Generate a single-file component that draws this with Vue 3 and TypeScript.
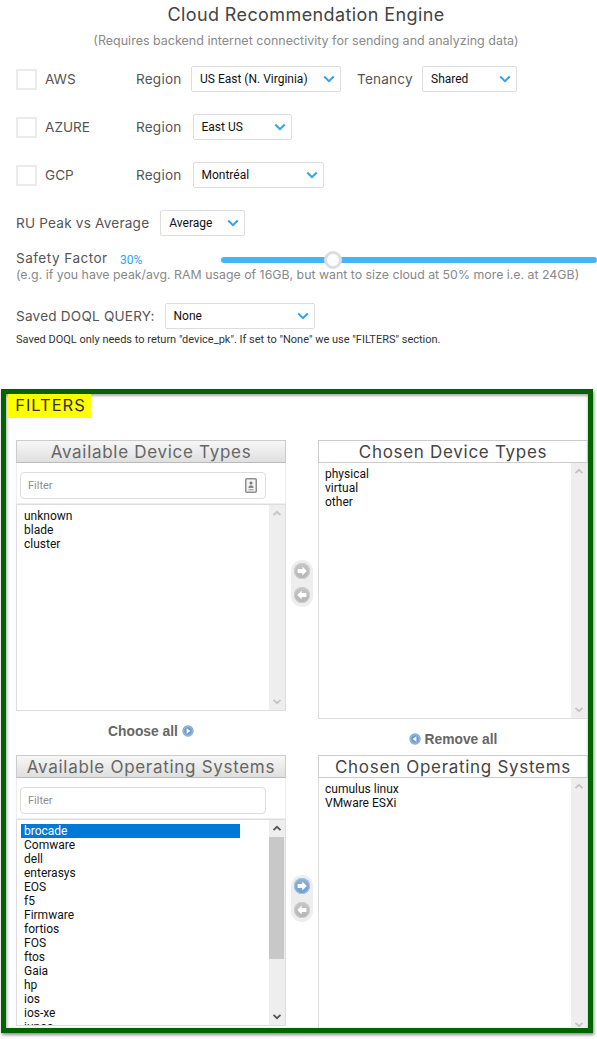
<script setup lang="ts">
interface Cloud {
  name: string
  region: string
  mod: string
  options: string[]
}

interface Pane {
  title: string
  items: string[]
  selected?: string
  thumb?: boolean
}

interface Selector {
  available: Pane
  chosen: Pane
  hasIcon: boolean
  active: boolean
}

const clouds: Cloud[] = [
  { name: 'AWS', region: 'US East (N. Virginia)', mod: 'aws', options: ['US East (N. Virginia)'] },
  { name: 'AZURE', region: 'East US', mod: 'azure', options: ['East US'] },
  { name: 'GCP', region: 'Montréal', mod: 'gcp', options: ['Montréal'] },
]

const selectors: Selector[] = [
  {
    available: { title: 'Available Device Types', items: ['unknown', 'blade', 'cluster'] },
    chosen: { title: 'Chosen Device Types', items: ['physical', 'virtual', 'other'] },
    hasIcon: true,
    active: false,
  },
  {
    available: {
      title: 'Available Operating Systems',
      items: ['brocade', 'Comware', 'dell', 'enterasys', 'EOS', 'f5', 'Firmware', 'fortios', 'FOS', 'ftos', 'Gaia', 'hp', 'ios', 'ios-xe', 'iunos'],
      selected: 'brocade',
      thumb: true,
    },
    chosen: { title: 'Chosen Operating Systems', items: ['cumulus linux', 'VMware ESXi'] },
    hasIcon: false,
    active: true,
  },
]
</script>

<template>
  <main class="page">
    <header class="head">
      <h1 class="title">Cloud Recommendation Engine</h1>
      <p class="subtitle">(Requires backend internet connectivity for sending and analyzing data)</p>
    </header>

    <section class="clouds">
      <div v-for="c in clouds" :key="c.name" class="cloud-row" :class="'row-' + c.mod">
        <input class="check" type="checkbox" :aria-label="c.name" />
        <span class="cloud-name">{{ c.name }}</span>
        <span class="label region">Region</span>
        <div class="select-wrap" :class="'sel-' + c.mod">
          <select class="select">
            <option v-for="o in c.options" :key="o">{{ o }}</option>
          </select>
          <svg class="chev" viewBox="0 0 12 8"><path d="M1.2 1.5 6 6.2l4.8-4.7" /></svg>
        </div>
        <template v-if="c.mod === 'aws'">
          <span class="label tenancy">Tenancy</span>
          <div class="select-wrap sel-tenancy">
            <select class="select"><option>Shared</option></select>
            <svg class="chev" viewBox="0 0 12 8"><path d="M1.2 1.5 6 6.2l4.8-4.7" /></svg>
          </div>
        </template>
      </div>
    </section>

    <section class="peak">
      <span class="label">RU Peak vs Average</span>
      <div class="select-wrap sel-peak">
        <select class="select"><option>Average</option></select>
        <svg class="chev" viewBox="0 0 12 8"><path d="M1.2 1.5 6 6.2l4.8-4.7" /></svg>
      </div>
    </section>

    <section class="safety">
      <div class="safety-line">
        <span class="label safety-label">Safety Factor</span>
        <span class="pct">30%</span>
        <input class="slider" type="range" min="0" max="100" step="0.1" value="28.7" aria-label="Safety Factor" />
      </div>
      <p class="hint">(e.g. if you have peak/avg. RAM usage of 16GB, but want to size cloud at 50% more i.e. at 24GB)</p>
    </section>

    <section class="doql">
      <div class="doql-line">
        <span class="label">Saved DOQL QUERY:</span>
        <div class="select-wrap sel-doql">
          <select class="select"><option>None</option></select>
          <svg class="chev" viewBox="0 0 12 8"><path d="M1.2 1.5 6 6.2l4.8-4.7" /></svg>
        </div>
      </div>
      <p class="note">Saved DOQL only needs to return "device_pk". If set to "None" we use "FILTERS" section.</p>
    </section>

    <section class="frame">
      <h2 class="filters-tag">FILTERS</h2>

      <div v-for="s in selectors" :key="s.available.title" class="selector">
        <div class="col">
          <div class="pane-title available-title">{{ s.available.title }}</div>
          <div class="filter-box">
            <div class="filter-input">
              <span class="placeholder">Filter</span>
              <svg v-if="s.hasIcon" class="card-icon" viewBox="0 0 12 15">
                <rect x="0.75" y="0.75" width="10.5" height="13.5" rx="1" fill="#f4f4f4" stroke="#8f8f8f" stroke-width="1.5" />
                <circle cx="6" cy="5" r="1.5" fill="#777" />
                <path d="M3.4 10c0-1.8 1-2.7 2.6-2.7S8.6 8.200 8.600 10z" fill="#888" />
                <rect x="3.400" y="11" width="5.200" height="1.300" fill="#aaa" />
              </svg>
            </div>
          </div>
          <div class="list list-available">
            <div class="items">
              <div v-for="item in s.available.items" :key="item" class="item" :class="{ selected: item === s.available.selected }">{{ item }}</div>
            </div>
            <div class="scroll" :class="{ 'scroll-on': s.available.thumb }">
              <svg class="scroll-arrow" viewBox="0 0 10 7"><path d="M1.5 5.2 5 1.8l3.5 3.4" /></svg>
              <div class="track"><div v-if="s.available.thumb" class="thumb"></div></div>
              <svg class="scroll-arrow" viewBox="0 0 10 7"><path d="M1.5 1.8 5 5.2l3.5-3.4" /></svg>
            </div>
          </div>
          <a class="all-link choose-all">
            Choose all
            <svg class="all-icon" viewBox="0 0 12 12">
              <circle cx="6" cy="6" r="5.7" fill="#7fa8d4" />
              <circle cx="6" cy="6" r="4.3" fill="#6f9bcb" stroke="#b9d0e8" stroke-width="0.6" />
              <path d="M4.6 3.3 8.4 6 4.6 8.700z" fill="#fff" />
            </svg>
          </a>
        </div>

        <div class="mover">
          <span class="mv-btn" :class="{ 'mv-active': s.active }">
            <svg viewBox="0 0 16 16"><path d="M8.300 3.500 12.800 8 8.300 12.500V10H3.600V6h4.700z" fill="#fff" /></svg>
          </span>
          <span class="mv-btn">
            <svg viewBox="0 0 16 16"><path d="M7.700 3.500 3.200 8l4.500 4.500V10h4.700V6H7.700z" fill="#fff" /></svg>
          </span>
        </div>

        <div class="col">
          <div class="pane-title chosen-title">{{ s.chosen.title }}</div>
          <div class="list list-chosen">
            <div class="items">
              <div v-for="item in s.chosen.items" :key="item" class="item">{{ item }}</div>
            </div>
            <div class="scroll">
              <svg class="scroll-arrow" viewBox="0 0 10 7"><path d="M1.5 5.2 5 1.8l3.5 3.4" /></svg>
              <div class="track"></div>
              <svg class="scroll-arrow" viewBox="0 0 10 7"><path d="M1.5 1.8 5 5.2l3.5-3.4" /></svg>
            </div>
          </div>
          <a class="all-link remove-all">
            <svg class="all-icon" viewBox="0 0 12 12">
              <circle cx="6" cy="6" r="5.7" fill="#7fa8d4" />
              <circle cx="6" cy="6" r="4.3" fill="#6f9bcb" stroke="#b9d0e8" stroke-width="0.6" />
              <path d="M7.400 3.300 3.600 6l3.800 2.700z" fill="#fff" />
            </svg>
            Remove all
          </a>
        </div>
      </div>
    </section>
  </main>
</template>

<style>
html,
body {
  margin: 0;
  background: #fff;
}
</style>

<style scoped>
.page {
  width: 597px;
  height: 1039px;
  overflow: hidden;
  font-family: Inter, "Liberation Sans", sans-serif;
  color: #444;
  background: #fff;
}

.head {
  text-align: center;
  padding-top: 4px;
  padding-left: 15px;
}

.title {
  margin: 0;
  font-size: 18px;
  line-height: 22px;
  font-weight: 400;
  color: #444;
  letter-spacing: 0.4px;
}

.subtitle {
  margin: 6px 0 0;
  font-size: 12.5px;
  line-height: 18px;
  color: #8a8a8a;
}

.clouds {
  padding: 16px 0 0 16px;
  display: flex;
  flex-direction: column;
  gap: 22px;
}

.cloud-row {
  display: flex;
  align-items: center;
  height: 26px;
}

.check {
  appearance: none;
  width: 21px;
  height: 21px;
  margin: 0 8px 0 0;
  background: #fff;
  border: 2px solid #eaeaea;
  box-sizing: border-box;
  flex: none;
}

.cloud-name {
  width: 91px;
  font-size: 13.600px;
  color: #555;
}

.label {
  font-size: 13.600px;
  color: #555;
  letter-spacing: 0.2px;
  white-space: nowrap;
}

.region {
  width: 55px;
}

.row-azure .region,
.row-gcp .region {
  width: 56.500px;
}

.tenancy {
  margin-left: 16px;
  width: 65px;
}

.select-wrap {
  position: relative;
  height: 26px;
  flex: none;
}

.select {
  appearance: none;
  display: block;
  width: 100%;
  height: 26px;
  box-sizing: border-box;
  padding: 0 24px 0 8px;
  border: 1px solid #ddd;
  border-radius: 2px;
  background: #fff;
  font-family: Roboto, "Liberation Sans", sans-serif;
  font-size: 12px;
  color: #111;
}

.chev {
  position: absolute;
  right: 6px;
  top: 9px;
  width: 12px;
  height: 8px;
  fill: none;
  stroke: #2ea3f2;
  stroke-width: 2;
  pointer-events: none;
}

.sel-aws { width: 150px; }
.sel-azure { width: 99px; }
.sel-gcp { width: 131px; }
.sel-tenancy { width: 95px; }
.sel-peak { width: 85px; margin-left: 11px; }
.sel-doql { width: 150px; margin-left: 10px; }

.peak {
  display: flex;
  align-items: center;
  padding: 22px 0 0 16px;
}

.safety {
  padding: 12px 0 0 16px;
}

.safety-line {
  display: flex;
  align-items: center;
  height: 20px;
}

.safety-label {
  width: 92px;
  flex: none;
  letter-spacing: 0.45px;
}

.pct {
  font-family: Roboto, "Liberation Sans", sans-serif;
  font-size: 12px;
  color: #2ea3f2;
  margin: 4px 0 0 12px;
  width: 101px;
  flex: none;
}

.slider {
  appearance: none;
  width: 376px;
  height: 6px;
  margin: 4px 0 0;
  border-radius: 3px;
  background: #45b5f5;
  flex: none;
}

.slider::-webkit-slider-thumb {
  appearance: none;
  width: 18px;
  height: 18px;
  border-radius: 50%;
  background: #fff;
  border: 3px solid #ddd;
  box-sizing: border-box;
}

.hint {
  margin: 0;
  font-size: 12.350px;
  line-height: 14px;
  color: #888;
  white-space: nowrap;
}

.doql {
  padding: 21px 0 0 16px;
}

.doql-line {
  display: flex;
  align-items: center;
}

.note {
  margin: 3px 0 0;
  font-family: Roboto, "Liberation Sans", sans-serif;
  font-size: 11px;
  line-height: 16px;
  color: #333;
  white-space: nowrap;
}

.frame {
  margin: 41px 0 0 1px;
  width: 592px;
  height: 644px;
  box-sizing: border-box;
  border: 5px solid #006400;
  background: #fff;
  box-shadow: inset 0 2px 3px rgba(0, 0, 0, 0.3), inset 2px 0 3px rgba(0, 0, 0, 0.12), 1px 2px 3px rgba(0, 0, 0, 0.45);
  overflow: hidden;
}

.filters-tag {
  margin: 0 0 0 2px;
  width: 83px;
  height: 24px;
  box-sizing: border-box;
  padding-left: 2px;
  background: #ffff00;
  font-size: 16.500px;
  line-height: 23px;
  font-weight: 400;
  letter-spacing: 1px;
  color: #333;
  text-align: center;
}

.selector {
  display: flex;
  width: 590px;
  height: 315px;
  margin-left: 10px;
}

.selector:first-of-type {
  margin-top: 22px;
}

.col {
  width: 270px;
  flex: none;
  display: flex;
  flex-direction: column;
}

.pane-title {
  height: 23px;
  box-sizing: border-box;
  border: 1px solid #ccc;
  font-size: 17px;
  line-height: 22px;
  text-align: center;
  white-space: nowrap;
  letter-spacing: 0.7px;
  color: #444;
}

.available-title {
  border-bottom: 1px solid #bbb;
  background: linear-gradient(#f7f7f7, #dfdfdf);
  color: #666;
}

.filter-box {
  height: 41px;
  box-sizing: border-box;
  padding: 9px 0 0 3px;
  border: 1px solid #eee;
  border-top: 0;
}

.filter-input {
  width: 246px;
  height: 27px;
  box-sizing: border-box;
  border: 1px solid #ddd;
  border-radius: 4px;
  padding: 0 7px;
  display: flex;
  align-items: center;
  justify-content: space-between;
}

.placeholder {
  font-family: Roboto, "Liberation Sans", sans-serif;
  font-size: 11px;
  color: #8d8d8d;
}

.card-icon {
  width: 12px;
  height: 15px;
  margin-right: 1px;
}

.list {
  display: flex;
  box-sizing: border-box;
  border: 1px solid #ddd;
  overflow: hidden;
}

.list-available {
  height: 207px;
}

.list-chosen {
  height: 256px;
  border-top: 0;
}

.items {
  flex: 1;
  min-width: 0;
  padding: 4px;
  font-family: Roboto, "Liberation Sans", sans-serif;
  font-size: 12px;
  line-height: 14px;
  color: #111;
}

.list-chosen .items {
  padding: 4px 3px;
}

.item {
  padding-left: 3px;
  margin-right: 25px;
}

.selected {
  background: #0078d7;
  color: #fff;
}

.scroll {
  width: 16px;
  flex: none;
  background: #eee;
  display: flex;
  flex-direction: column;
  align-items: center;
}

.scroll-arrow {
  width: 10px;
  height: 7px;
  margin: 5px 0;
  fill: none;
  stroke: #c4c4c4;
  stroke-width: 1.800;
  flex: none;
}

.scroll-on .scroll-arrow {
  stroke: #555;
}

.track {
  flex: 1;
  width: 100%;
  min-height: 0;
}

.thumb {
  width: 15px;
  height: 122px;
  background: #c8c8c8;
}

.all-link {
  font-family: "Liberation Sans", sans-serif;
  font-size: 13.800px;
  font-weight: 700;
  color: #666;
  display: flex;
  align-items: center;
  justify-content: center;
  gap: 4px;
  height: 18px;
  margin-top: 11px;
}

.selector:nth-of-type(2) .all-link {
  display: none;
}

.all-icon {
  width: 12px;
  height: 12px;
}

.mover {
  width: 22px;
  margin: 120px 5px 0;
  flex: none;
  height: 47px;
  box-sizing: border-box;
  padding: 3px;
  display: flex;
  flex-direction: column;
  gap: 8px;
  background: #eee;
  border-radius: 11px;
  align-self: flex-start;
}

.mv-btn {
  width: 16px;
  height: 16px;
  border-radius: 50%;
  background: linear-gradient(#c6c6c6, #b4b4b4);
  box-shadow: inset 0 0 0 1px #cfcfcf;
  display: block;
}

.mv-btn svg {
  display: block;
  width: 16px;
  height: 16px;
}

.mv-active {
  background: linear-gradient(#8fb3da, #709ccd);
  box-shadow: inset 0 0 0 1px #a6c3e2;
}
</style>
